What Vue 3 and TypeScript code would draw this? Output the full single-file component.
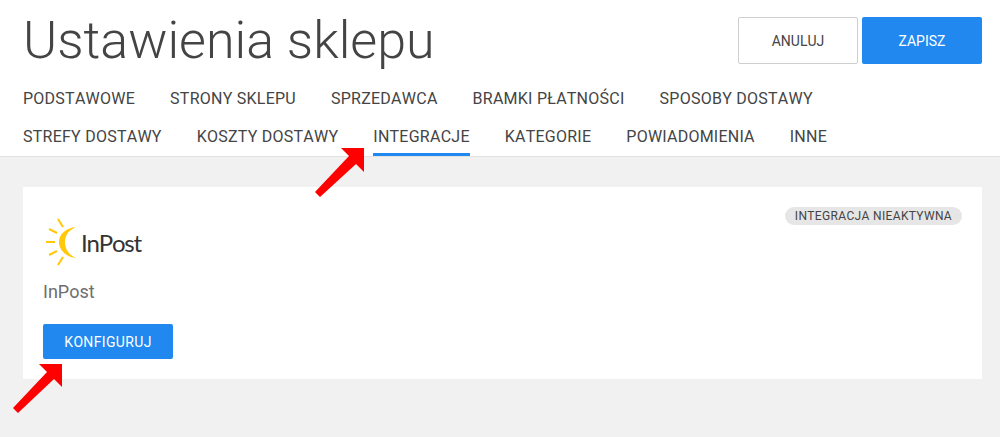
<script setup lang="ts">
const tabRows: string[][] = [
  ['PODSTAWOWE', 'STRONY SKLEPU', 'SPRZEDAWCA', 'BRAMKI PŁATNOŚCI', 'SPOSOBY DOSTAWY'],
  ['STREFY DOSTAWY', 'KOSZTY DOSTAWY', 'INTEGRACJE', 'KATEGORIE', 'POWIADOMIENIA', 'INNE'],
]
const activeTab = 'INTEGRACJE'
const rays = [
  'M58 219l5 8',
  'M49 229l8 4',
  'M46 242h9',
  'M49 255l8-4',
  'M58 265l5-8',
]
</script>

<template>
  <div class="page">
    <header class="header">
      <div class="top">
        <h1>Ustawienia sklepu</h1>
        <div class="actions">
          <button class="btn ghost">ANULUJ</button>
          <button class="btn primary">ZAPISZ</button>
        </div>
      </div>
      <nav class="tabs">
        <div v-for="(row, r) in tabRows" :key="r" class="tab-row">
          <a v-for="tab in row" :key="tab" class="tab" :class="{ active: tab === activeTab }">{{ tab }}</a>
        </div>
      </nav>
    </header>

    <main class="content">
      <section class="card">
        <div class="card-top">
          <div class="logo">
            <svg width="33" height="50" viewBox="45 217 33 50" fill="none">
              <path v-for="d in rays" :key="d" :d="d" stroke="#ffc80a" stroke-width="2" />
              <path d="M76 227c-10 1-17 7-17 15s7 15 17 16c-7-3-11-9-11-16s4-12 11-15z" fill="#ffc80a" />
            </svg>
            <span class="logo-text">InPost</span>
          </div>
          <span class="badge">INTEGRACJA NIEAKTYWNA</span>
        </div>
        <p class="name">InPost</p>
        <button class="btn primary small">KONFIGURUJ</button>
      </section>
    </main>

    <svg class="arrows" width="1000" height="437" viewBox="0 0 1000 437">
      <path d="M341 148h23v24l-8-8-36 33-5-5 34-36z" fill="#ff0000" />
      <path d="M39 364h23v23l-8-8-36 34-5-5 34-36z" fill="#ff0000" />
    </svg>
  </div>
</template>

<style>
html, body {
  margin: 0;
  background: #fff;
}
</style>

<style scoped>
.page {
  position: relative;
  width: 1000px;
  height: 437px;
  overflow: hidden;
  font-family: Roboto, "Liberation Sans", sans-serif;
  font-kerning: none;
  color: #444;
}
.header {
  height: 156px;
  padding: 0 18px 0 23px;
  background: #fff;
  border-bottom: 1px solid #e2e2e2;
}
.top {
  display: flex;
  justify-content: space-between;
  align-items: flex-start;
  height: 80px;
}
h1 {
  margin: 10px 0 0;
  font-size: 52px;
  line-height: 62px;
  font-weight: 300;
}
.actions {
  display: flex;
  gap: 4px;
  padding-top: 17px;
}
.btn {
  font-family: inherit;
  font-kerning: none;
  font-size: 14px;
  border-radius: 2px;
  cursor: pointer;
  width: 120px;
  height: 47px;
  border: 1px solid transparent;
  padding: 0;
}
.ghost {
  background: #fff;
  border-color: #cfcfcf;
  color: #444;
}
.primary {
  background: #2088ee;
  color: #fff;
}
.small {
  width: 130px;
  height: 35px;
  letter-spacing: 0.35px;
}
.tabs {
  display: flex;
  flex-direction: column;
}
.tab-row {
  display: flex;
  gap: 35px;
  height: 38px;
}
.tab {
  display: block;
  height: 38px;
  font-size: 16px;
  letter-spacing: 0.25px;
  line-height: 37px;
  box-sizing: border-box;
}
.active {
  border-bottom: 3px solid #2088ee;
}
.content {
  height: 279px;
  padding: 30px 18px 0 23px;
  background: #f1f1f1;
}
.card {
  height: 192px;
  box-sizing: border-box;
  padding: 20px 20px 0;
  background: #fff;
}
.card-top {
  display: flex;
  justify-content: space-between;
  align-items: flex-start;
  height: 74px;
}
.logo {
  display: flex;
  align-items: center;
  gap: 3px;
  margin: 10px 0 0 2px;
}
.logo-text {
  font-family: Lato, sans-serif;
  font-size: 24px;
  letter-spacing: -1.2px;
  color: #333;
}
.badge {
  height: 18px;
  line-height: 18px;
  padding: 0 10px;
  border-radius: 9px;
  background: #e6e6e6;
  font-size: 12px;
  letter-spacing: 0.35px;
}
.name {
  margin: 0 0 21px;
  font-size: 18px;
  line-height: 22px;
  color: #6e6e6e;
}
.arrows {
  position: absolute;
  left: 0;
  top: 0;
  pointer-events: none;
}
</style>
